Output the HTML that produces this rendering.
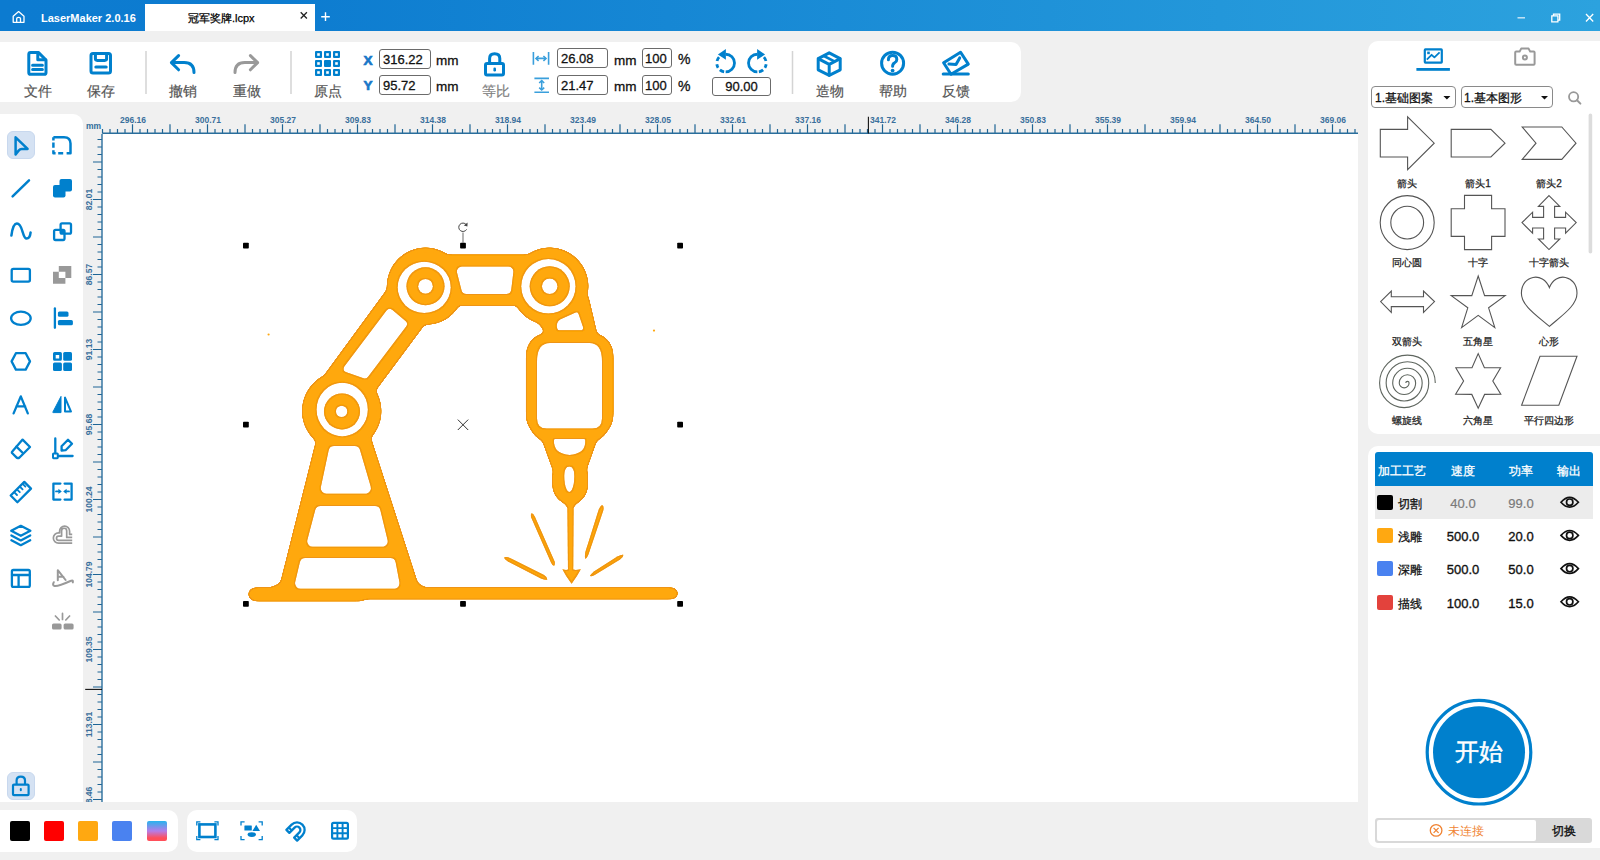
<!DOCTYPE html>
<html><head><meta charset="utf-8">
<style>
*{box-sizing:border-box;margin:0;padding:0}
html,body{width:1600px;height:860px;overflow:hidden;background:#f0f0f0;font-family:"Liberation Sans",sans-serif;position:relative}
.a{position:absolute}
svg{position:absolute;overflow:visible}
.lbl{position:absolute;font-size:14px;color:#555;white-space:nowrap;line-height:1;-webkit-text-stroke:0.2px #555}
.inp{position:absolute;border:1px solid #6b6b6b;border-radius:3px;background:#fff;font-size:13px;color:#111;line-height:20px;padding-left:3px;white-space:nowrap;-webkit-text-stroke:0.3px #111}
.sl{font-size:10px;color:#222;width:80px;text-align:center;line-height:1;-webkit-text-stroke:0.25px #222}
.th{font-size:12px;color:#fff;line-height:1;width:60px;text-align:left;-webkit-text-stroke:0.3px #fff}
.td{font-size:12px;color:#111;line-height:1;-webkit-text-stroke:0.3px #111}
.tn{font-size:13px;color:#111;line-height:1;width:60px;text-align:center;-webkit-text-stroke:0.35px #111}
.unit{position:absolute;font-size:13.5px;color:#111;line-height:1;white-space:nowrap;-webkit-text-stroke:0.3px #111}
</style></head><body>
<!-- title bar -->
<div class="a" style="left:0;top:0;width:1600px;height:31px;background:linear-gradient(90deg,#0c7bd0 0%,#0d7cd0 18%,#2ca2de 100%)"></div>
<div class="a" style="left:145px;top:4px;width:170px;height:27px;background:#fff"></div>
<svg class="a" style="left:0;top:0" width="40" height="31" viewBox="0 0 40 31">
<path d="M13.2 22.3V16.2L18.6 11.6L24 16.2V22.3ZM16.7 22.3V18.6Q16.7 17.4 18.6 17.4Q20.5 17.4 20.5 18.6V22.3" fill="none" stroke="#fff" stroke-width="1.3" stroke-linejoin="round"/>
</svg>
<div class="a" style="left:41px;top:13px;font-size:11px;color:#fff;font-weight:bold;line-height:1">LaserMaker 2.0.16</div>
<div class="a" style="left:188px;top:12.5px;font-size:11px;color:#000;line-height:1;-webkit-text-stroke:0.25px #000">冠军奖牌.lcpx</div>
<svg class="a" style="left:0;top:0" width="1600" height="31">
<path d="M300.7 12.3L306.9 18.5M306.9 12.3L300.7 18.5" stroke="#222" stroke-width="1.3"/>
<path d="M325.5 12.3V21M321.2 16.7H329.8" stroke="#fff" stroke-width="1.4"/>
<path d="M1517.5 17.8H1525" stroke="#cfe8f7" stroke-width="1.4"/>
<path d="M1551.8 15.9H1557.9V21.8H1551.8ZM1553.5 15.9V14.2H1559.7V20.1H1557.9" fill="none" stroke="#fff" stroke-width="1.3"/>
<path d="M1586 14L1593.2 21.5M1593.2 14L1586 21.5" stroke="#fff" stroke-width="1.3"/>
</svg>

<!-- toolbar -->
<div class="a" style="left:0;top:42px;width:1021px;height:60px;background:#fff;border-radius:0 10px 10px 0"></div>
<svg class="a" style="left:0;top:0" width="1021" height="102">
<g fill="none" stroke="#0080cd" stroke-width="3" stroke-linejoin="round" stroke-linecap="round">
<!-- file -->
<path d="M28.8 54.5Q28.8 52.6 30.6 52.6H38.6L46 60V72.4Q46 74.3 44.2 74.3H30.6Q28.8 74.3 28.8 72.4Z"/>
<path d="M37.8 52.8V59.8H45.6"/>
<path d="M32.6 65.2H42.4M32.6 69.4H42.4"/>
<!-- save -->
<rect x="91" y="53.6" width="19.5" height="19.5" rx="2"/>
<path d="M95.4 54V58.6Q95.4 60.4 97.2 60.4H104.8Q106.6 60.4 106.6 58.6V54"/>
<path d="M95.8 66.9H106.2"/>
<!-- undo -->
<path d="M178.6 55.6L171.4 62.6L178.6 69.8"/>
<path d="M172 62.6H184.2Q194 62.6 194 72.6"/>
<!-- lock -->
<rect x="485.5" y="63.6" width="18" height="11.3" rx="1.5"/>
<path d="M489.6 63.4V58.6Q489.6 53.7 494.6 53.7Q499.8 53.7 499.8 58.6V63.4"/>
<!-- help -->
<circle cx="892.6" cy="63.2" r="11"/>
<path d="M888.4 59.8Q888.4 55.6 892.6 55.6Q896.8 55.6 896.8 59.4Q896.8 61.6 894.6 62.8Q892.6 63.8 892.6 66.2"/>
<!-- box -->
<path d="M829.2 52.8L840.2 58.6V69.8L829.2 75.4L818.2 69.8V58.6Z"/>
<path d="M818.6 58.8L829.2 64.4L839.8 58.8M829.2 64.4V75"/>
<path d="M824 56L834.4 61.4" stroke-width="2.6"/>
<!-- feedback -->
<path d="M943.6 62.7L960.6 52.2L968.3 64.1L951 74.2Z"/>
<path d="M948.9 64.1L956 64.5L959.7 57.9"/>
<path d="M943.2 73.9H968.3"/>
</g>
<g fill="none" stroke="#999" stroke-width="3" stroke-linejoin="round" stroke-linecap="round">
<path d="M250.4 55.6L257.6 62.6L250.4 69.8"/>
<path d="M257 62.6H244.8Q235 62.6 235 72.6"/>
</g>
<circle cx="892.6" cy="70.6" r="1.9" fill="#0080cd"/>
<rect x="493.4" y="67.6" width="2.6" height="3.8" rx="1.2" fill="#0080cd"/>
<!-- origin grid -->
<g fill="#0080cd">
<rect x="315" y="51" width="7" height="7" rx="1"/><rect x="324" y="51" width="7" height="7" rx="1"/><rect x="333" y="51" width="7" height="7" rx="1"/>
<rect x="315" y="60" width="7" height="7" rx="1"/><rect x="324" y="60" width="7" height="7" rx="1"/><rect x="333" y="60" width="7" height="7" rx="1"/>
<rect x="315" y="69" width="7" height="7" rx="1"/><rect x="324" y="69" width="7" height="7" rx="1"/><rect x="333" y="69" width="7" height="7" rx="1"/>
</g>
<g fill="#fff">
<rect x="317.2" y="53.2" width="2.6" height="2.6"/><rect x="326.2" y="53.2" width="2.6" height="2.6"/><rect x="335.2" y="53.2" width="2.6" height="2.6"/>
<rect x="317.2" y="62.2" width="2.6" height="2.6"/><rect x="335.2" y="62.2" width="2.6" height="2.6"/>
<rect x="317.2" y="71.2" width="2.6" height="2.6"/><rect x="326.2" y="71.2" width="2.6" height="2.6"/><rect x="335.2" y="71.2" width="2.6" height="2.6"/>
</g>
<!-- separators -->
<path d="M146 51V94M291 51V94M792.5 51V94" stroke="#d4d4d4" stroke-width="1.5"/>
<!-- width/height icons -->
<g fill="none" stroke="#3a9fdc" stroke-width="1.6">
<path d="M533.4 52V64.8M548.6 52V64.8M536 58.4H546"/>
<path d="M538.6 56L536 58.4L538.6 60.8M543.4 56L546 58.4L543.4 60.8"/>
<path d="M534.4 78.4H549M534.4 92.2H549M541.7 80.6V90"/>
<path d="M539.2 83L541.7 80.6L544.2 83M539.2 87.6L541.7 90L544.2 87.6"/>
</g>
<!-- rotate icons -->
<g fill="none" stroke="#0080cd" stroke-width="2.8">
<g id="rot"><path d="M725.65 54.25A8.85 8.85 0 0 1 725.65 71.95"/>
<path d="M725.65 71.95A8.85 8.85 0 0 1 719.07 57.18" stroke-dasharray="0 1.55 4.6 2.6 3.9 3.1 4.6 100"/></g>
<use href="#rot" transform="translate(1483 0) scale(-1 1)"/>
</g>
<path d="M725.9 48.9V59.8L717.9 54.55Z" fill="#0080cd"/>
<path d="M757.1 48.9V59.8L765.1 54.55Z" fill="#0080cd"/>
<!-- X Y labels -->
<text x="363.4" y="64.6" font-size="13.6" font-weight="bold" fill="#1877c8" stroke="#1877c8" stroke-width="0.7" font-family="Liberation Sans">X</text>
<text x="363.6" y="90.4" font-size="13.6" font-weight="bold" fill="#1877c8" stroke="#1877c8" stroke-width="0.7" font-family="Liberation Sans">Y</text>
</svg>
<div class="lbl" style="left:23.5px;top:84.3px">文件</div>
<div class="lbl" style="left:86.5px;top:84.3px">保存</div>
<div class="lbl" style="left:168.5px;top:84.3px">撤销</div>
<div class="lbl" style="left:232.5px;top:84.3px">重做</div>
<div class="lbl" style="left:313.5px;top:84.3px">原点</div>
<div class="lbl" style="left:481.5px;top:84.3px;color:#808080;-webkit-text-stroke:0.2px #808080">等比</div>
<div class="lbl" style="left:815.5px;top:84.3px">造物</div>
<div class="lbl" style="left:878.5px;top:84.3px">帮助</div>
<div class="lbl" style="left:941.5px;top:84.3px">反馈</div>
<div class="inp" style="left:379px;top:49px;width:52px;height:20px">316.22</div>
<div class="inp" style="left:379px;top:75px;width:52px;height:20px">95.72</div>
<div class="unit" style="left:436px;top:54px">mm</div>
<div class="unit" style="left:436px;top:80px">mm</div>
<div class="inp" style="left:557px;top:48px;width:51px;height:20px">26.08</div>
<div class="inp" style="left:557px;top:75px;width:51px;height:20px">21.47</div>
<div class="unit" style="left:614px;top:54px">mm</div>
<div class="unit" style="left:614px;top:80px">mm</div>
<div class="inp" style="left:642px;top:48px;width:30px;height:20px;padding-left:2px">100</div>
<div class="inp" style="left:642px;top:75px;width:30px;height:20px;padding-left:2px">100</div>
<div class="unit" style="left:678px;top:52px;font-size:14px">%</div>
<div class="unit" style="left:678px;top:79px;font-size:14px">%</div>
<div class="inp" style="left:712px;top:77px;width:59px;height:19px;padding-left:0;text-align:center;line-height:18px">90.00</div>

<!-- left panel -->
<div class="a" style="left:0;top:114px;width:83px;height:688px;background:#fff;border-radius:0 10px 0 0"></div>
<div class="a" style="left:7px;top:131px;width:27.5px;height:27.5px;background:#d5e2f3;border:1px solid #c8d8ee;border-radius:6px"></div>
<div class="a" style="left:7px;top:772px;width:28px;height:28px;background:#d5e2f3;border:1px solid #c8d8ee;border-radius:6px"></div>
<svg class="a" style="left:0;top:0" width="84" height="860">
<g fill="none" stroke="#0080cd" stroke-width="2.3" stroke-linejoin="round" stroke-linecap="round">
<!-- select -->
<path d="M15.6 137.3L27.6 148.9H21.8Q20 148.9 18.6 150.6L15.6 154.4Z" stroke-width="2.5"/>
<!-- dashed rounded rect -->
<path d="M53.4 137.2H64Q70.5 137.2 70.5 143.6V153.2H66.6" stroke-width="2.5" stroke-linecap="butt"/>
<path d="M63.2 153.2H58.2M55.6 153.2H53.4V150.2M53.4 147.8V142.6M53.4 140.4V137.2" stroke-width="2.5" stroke-linecap="butt"/>
<!-- line -->
<path d="M12.6 196.4L29 180.3" stroke-width="2.5"/>
<!-- wave -->
<path d="M11.4 235.6Q13 223.6 16.9 223.6Q20.2 223.6 22.6 231.8Q24.6 238.6 26.6 238.6Q30 238.6 30.6 232.4" stroke-width="2.5"/>
<!-- intersect -->
<rect x="54.1" y="229.8" width="10.4" height="10.2" rx="1.4"/>
<rect x="60.6" y="223.4" width="10.4" height="10.2" rx="1.4"/>
<!-- rect -->
<rect x="11.7" y="268.8" width="18.2" height="12.8" rx="1.6"/>
<!-- ellipse -->
<ellipse cx="20.9" cy="318.3" rx="9.8" ry="6.6"/>
<!-- align -->
<path d="M54.9 308.4V327.8"/>
<!-- hexagon -->
<path d="M11.6 361.4L15.9 353.2H25.7L30 361.4L25.7 369.6H15.9Z"/>
<!-- A -->
<path d="M13.6 413.4L20.8 396.4L27.8 413.4M16.4 406.3H25.2"/>
<!-- mirror outline tri -->
<path d="M65 397.6V411.6H71L65 397.6Z" stroke-width="2"/>
<!-- eraser -->
<path d="M22.6 439.6L30 447L19 458L17.5 458Q17 458 16.4 457.4L12.3 453.3Q11.4 452.4 12.3 451.5Z"/>
<path d="M16.4 446.6L22.6 452.8"/>
<!-- pen corner -->
<path d="M55.3 438.4V453.2M58 456H72.6"/>
<rect x="53" y="453.4" width="4.8" height="4.8" rx="0.6" stroke-width="2"/>
<path d="M61.6 450.6V446.2L68 439.8L72 443.8L65.6 450.2Z"/>
<!-- ruler -->
<path d="M24.3 481.9L31 488.6L17.4 502.2L10.7 495.5Z"/>
<path d="M14.6 492.6L17 495M17.4 489.8L19.8 492.2M20.2 487L22.6 489.4M23 484.2L25.4 486.6" stroke-width="1.8"/>
<!-- compress -->
<path d="M60.4 483.6H53.4V499.6H60.4M64.6 483.6H71.6V499.6H64.6"/>
<path d="M56 491.4H59.6M69 491.4H65.4" stroke-width="1.8"/>
<!-- layers -->
<path d="M20.8 525.8L30.4 530.8L20.8 535.8L11.2 530.8Z"/>
<path d="M11.4 535.4L20.8 540.4L30.2 535.4M11.4 540.2L20.8 545.2L30.2 540.2"/>
<!-- layout -->
<rect x="11.9" y="570" width="17.9" height="16.9" rx="1.4"/>
<path d="M12 575H29.8M18.6 575V586.8"/>
<!-- bottom frame icons -->
</g>
<path d="M58.4 488.8L61.8 491.4L58.4 494ZM66.6 488.8L63.2 491.4L66.6 494Z" fill="#0080cd"/>
<g fill="#0080cd">
<!-- union -->
<rect x="53" y="184.9" width="12.5" height="12.7" rx="2"/>
<rect x="59.5" y="178.9" width="12.5" height="12.5" rx="2"/>
<!-- intersect overlap -->
<rect x="60.6" y="229.8" width="3.9" height="3.8"/>
<!-- align bars -->
<rect x="57.9" y="311.5" width="10.6" height="5.3" rx="1.5"/>
<rect x="57.9" y="319.9" width="15" height="5.3" rx="1.5"/>
<!-- grid -->
<path d="M54.5 352.1H60.4Q61.9 352.1 61.9 353.6V359.3Q61.9 360.8 60.4 360.8H54.5Q53 360.8 53 359.3V353.6Q53 352.1 54.5 352.1ZM55.7 355V358.5H59.2V355Z" fill-rule="evenodd"/>
<rect x="63.2" y="352.1" width="8.8" height="8.7" rx="1.5"/>
<rect x="53" y="362.6" width="8.9" height="8.4" rx="1.5"/>
<rect x="63.2" y="362.6" width="8.8" height="8.4" rx="1.5"/>
<!-- mirror filled -->
<path d="M61 396.4V412.6H53.2Q52.6 412.6 52.9 412Z" stroke="#0080cd" stroke-width="1" stroke-linejoin="round"/>
<!-- lock bottom -->
</g>
<!-- xor gray -->
<path d="M53 271.7H58.8V266H71.3V277.9H65.4V283.8H53ZM58.8 271.7V277.9H65.4V271.7Z" fill="#999" fill-rule="evenodd"/>
<g fill="none" stroke="#999" stroke-width="2" stroke-linecap="round" stroke-linejoin="round">
<!-- offset cloud -->
<path d="M72.2 534.4H69.6V531.2A5 5 0 0 0 59.6 531.2V532.85H58.5A5.15 5.15 0 0 0 58.5 543.15H72.2M72.2 537.4H66.7V530.8A2.55 2.55 0 0 0 61.6 530.8V536.1H58.6A2.1 2.1 0 0 0 58.6 540.3H72.2" stroke-width="1.7" stroke-linecap="butt"/>
<!-- A with swoosh -->
<path d="M57.8 580.2V570.2L65.6 580M59.2 576.8H63.4"/>
<path d="M53.8 582.2Q52 585.4 54.6 586Q58 586.6 70.4 581Q73.6 579.6 72.8 582.4"/>
</g>
<!-- laser dots gray -->
<g fill="#999">
<rect x="52" y="623.5" width="9.6" height="6" rx="1.6"/>
<rect x="63.6" y="623.5" width="10" height="6" rx="1.6"/>
</g>
<path d="M62.5 613.4V619.4M55.4 616L59.2 620M69.6 616L65.8 620" stroke="#999" stroke-width="1.7" stroke-linecap="round"/>
<!-- lock bottom-left -->
<g fill="none" stroke="#0080cd" stroke-width="2.2">
<rect x="13" y="784.6" width="15.6" height="10.6" rx="1"/>
<path d="M16.6 784.4V780.6Q16.6 776.6 20.8 776.6Q25 776.6 25 780.6V784.4"/>
</g>
<rect x="19.8" y="788" width="2" height="3.2" rx="1" fill="#0080cd"/>
</svg>

<!-- canvas -->
<div class="a" style="left:102px;top:134px;width:1256px;height:668px;background:#fff"></div>
<svg class="a" style="left:0;top:0" width="1600" height="140">
<path d="M102.50 129.10V133.5M110.00 129.10V133.5M117.50 129.10V133.5M125.00 129.10V133.5M132.50 124.30V133.5M140.00 129.10V133.5M147.50 129.10V133.5M155.00 129.10V133.5M162.50 129.10V133.5M170.00 124.30V133.5M177.50 129.10V133.5M185.00 129.10V133.5M192.50 129.10V133.5M200.00 129.10V133.5M207.50 124.30V133.5M215.00 129.10V133.5M222.50 129.10V133.5M230.00 129.10V133.5M237.50 129.10V133.5M245.00 124.30V133.5M252.50 129.10V133.5M260.00 129.10V133.5M267.50 129.10V133.5M275.00 129.10V133.5M282.50 124.30V133.5M290.00 129.10V133.5M297.50 129.10V133.5M305.00 129.10V133.5M312.50 129.10V133.5M320.00 124.30V133.5M327.50 129.10V133.5M335.00 129.10V133.5M342.50 129.10V133.5M350.00 129.10V133.5M357.50 124.30V133.5M365.00 129.10V133.5M372.50 129.10V133.5M380.00 129.10V133.5M387.50 129.10V133.5M395.00 124.30V133.5M402.50 129.10V133.5M410.00 129.10V133.5M417.50 129.10V133.5M425.00 129.10V133.5M432.50 124.30V133.5M440.00 129.10V133.5M447.50 129.10V133.5M455.00 129.10V133.5M462.50 129.10V133.5M470.00 124.30V133.5M477.50 129.10V133.5M485.00 129.10V133.5M492.50 129.10V133.5M500.00 129.10V133.5M507.50 124.30V133.5M515.00 129.10V133.5M522.50 129.10V133.5M530.00 129.10V133.5M537.50 129.10V133.5M545.00 124.30V133.5M552.50 129.10V133.5M560.00 129.10V133.5M567.50 129.10V133.5M575.00 129.10V133.5M582.50 124.30V133.5M590.00 129.10V133.5M597.50 129.10V133.5M605.00 129.10V133.5M612.50 129.10V133.5M620.00 124.30V133.5M627.50 129.10V133.5M635.00 129.10V133.5M642.50 129.10V133.5M650.00 129.10V133.5M657.50 124.30V133.5M665.00 129.10V133.5M672.50 129.10V133.5M680.00 129.10V133.5M687.50 129.10V133.5M695.00 124.30V133.5M702.50 129.10V133.5M710.00 129.10V133.5M717.50 129.10V133.5M725.00 129.10V133.5M732.50 124.30V133.5M740.00 129.10V133.5M747.50 129.10V133.5M755.00 129.10V133.5M762.50 129.10V133.5M770.00 124.30V133.5M777.50 129.10V133.5M785.00 129.10V133.5M792.50 129.10V133.5M800.00 129.10V133.5M807.50 124.30V133.5M815.00 129.10V133.5M822.50 129.10V133.5M830.00 129.10V133.5M837.50 129.10V133.5M845.00 124.30V133.5M852.50 129.10V133.5M860.00 129.10V133.5M867.50 129.10V133.5M875.00 129.10V133.5M882.50 124.30V133.5M890.00 129.10V133.5M897.50 129.10V133.5M905.00 129.10V133.5M912.50 129.10V133.5M920.00 124.30V133.5M927.50 129.10V133.5M935.00 129.10V133.5M942.50 129.10V133.5M950.00 129.10V133.5M957.50 124.30V133.5M965.00 129.10V133.5M972.50 129.10V133.5M980.00 129.10V133.5M987.50 129.10V133.5M995.00 124.30V133.5M1002.50 129.10V133.5M1010.00 129.10V133.5M1017.50 129.10V133.5M1025.00 129.10V133.5M1032.50 124.30V133.5M1040.00 129.10V133.5M1047.50 129.10V133.5M1055.00 129.10V133.5M1062.50 129.10V133.5M1070.00 124.30V133.5M1077.50 129.10V133.5M1085.00 129.10V133.5M1092.50 129.10V133.5M1100.00 129.10V133.5M1107.50 124.30V133.5M1115.00 129.10V133.5M1122.50 129.10V133.5M1130.00 129.10V133.5M1137.50 129.10V133.5M1145.00 124.30V133.5M1152.50 129.10V133.5M1160.00 129.10V133.5M1167.50 129.10V133.5M1175.00 129.10V133.5M1182.50 124.30V133.5M1190.00 129.10V133.5M1197.50 129.10V133.5M1205.00 129.10V133.5M1212.50 129.10V133.5M1220.00 124.30V133.5M1227.50 129.10V133.5M1235.00 129.10V133.5M1242.50 129.10V133.5M1250.00 129.10V133.5M1257.50 124.30V133.5M1265.00 129.10V133.5M1272.50 129.10V133.5M1280.00 129.10V133.5M1287.50 129.10V133.5M1295.00 124.30V133.5M1302.50 129.10V133.5M1310.00 129.10V133.5M1317.50 129.10V133.5M1325.00 129.10V133.5M1332.50 124.30V133.5M1340.00 129.10V133.5M1347.50 129.10V133.5M1355.00 129.10V133.5" stroke="#1f6595" stroke-width="1.2" fill="none"/>
<path d="M102.5 133.3H1358" stroke="#2a6e9c" stroke-width="1.4"/>
<text x="133.0" y="122.8" text-anchor="middle" font-size="8.5" fill="#3a6f9c" font-family="Liberation Sans" font-weight="bold">296.16</text>
<text x="208.0" y="122.8" text-anchor="middle" font-size="8.5" fill="#3a6f9c" font-family="Liberation Sans" font-weight="bold">300.71</text>
<text x="283.0" y="122.8" text-anchor="middle" font-size="8.5" fill="#3a6f9c" font-family="Liberation Sans" font-weight="bold">305.27</text>
<text x="358.0" y="122.8" text-anchor="middle" font-size="8.5" fill="#3a6f9c" font-family="Liberation Sans" font-weight="bold">309.83</text>
<text x="433.0" y="122.8" text-anchor="middle" font-size="8.5" fill="#3a6f9c" font-family="Liberation Sans" font-weight="bold">314.38</text>
<text x="508.0" y="122.8" text-anchor="middle" font-size="8.5" fill="#3a6f9c" font-family="Liberation Sans" font-weight="bold">318.94</text>
<text x="583.0" y="122.8" text-anchor="middle" font-size="8.5" fill="#3a6f9c" font-family="Liberation Sans" font-weight="bold">323.49</text>
<text x="658.0" y="122.8" text-anchor="middle" font-size="8.5" fill="#3a6f9c" font-family="Liberation Sans" font-weight="bold">328.05</text>
<text x="733.0" y="122.8" text-anchor="middle" font-size="8.5" fill="#3a6f9c" font-family="Liberation Sans" font-weight="bold">332.61</text>
<text x="808.0" y="122.8" text-anchor="middle" font-size="8.5" fill="#3a6f9c" font-family="Liberation Sans" font-weight="bold">337.16</text>
<text x="883.0" y="122.8" text-anchor="middle" font-size="8.5" fill="#3a6f9c" font-family="Liberation Sans" font-weight="bold">341.72</text>
<text x="958.0" y="122.8" text-anchor="middle" font-size="8.5" fill="#3a6f9c" font-family="Liberation Sans" font-weight="bold">346.28</text>
<text x="1033.0" y="122.8" text-anchor="middle" font-size="8.5" fill="#3a6f9c" font-family="Liberation Sans" font-weight="bold">350.83</text>
<text x="1108.0" y="122.8" text-anchor="middle" font-size="8.5" fill="#3a6f9c" font-family="Liberation Sans" font-weight="bold">355.39</text>
<text x="1183.0" y="122.8" text-anchor="middle" font-size="8.5" fill="#3a6f9c" font-family="Liberation Sans" font-weight="bold">359.94</text>
<text x="1258.0" y="122.8" text-anchor="middle" font-size="8.5" fill="#3a6f9c" font-family="Liberation Sans" font-weight="bold">364.50</text>
<text x="1333.0" y="122.8" text-anchor="middle" font-size="8.5" fill="#3a6f9c" font-family="Liberation Sans" font-weight="bold">369.06</text>
<path d="M868.4 116.8V133.5" stroke="#111" stroke-width="1.1"/>
<text x="86" y="128.5" font-size="8.5" fill="#2f6d9a" font-family="Liberation Sans" font-weight="bold">mm</text>
</svg>
<svg class="a" style="left:0;top:0;overflow:hidden" width="110" height="802">
<path d="M97.50 139.50H102M97.50 147.00H102M97.50 154.50H102M93.00 162.00H102M97.50 169.50H102M97.50 177.00H102M97.50 184.50H102M97.50 192.00H102M93.00 199.50H102M97.50 207.00H102M97.50 214.50H102M97.50 222.00H102M97.50 229.50H102M93.00 237.00H102M97.50 244.50H102M97.50 252.00H102M97.50 259.50H102M97.50 267.00H102M93.00 274.50H102M97.50 282.00H102M97.50 289.50H102M97.50 297.00H102M97.50 304.50H102M93.00 312.00H102M97.50 319.50H102M97.50 327.00H102M97.50 334.50H102M97.50 342.00H102M93.00 349.50H102M97.50 357.00H102M97.50 364.50H102M97.50 372.00H102M97.50 379.50H102M93.00 387.00H102M97.50 394.50H102M97.50 402.00H102M97.50 409.50H102M97.50 417.00H102M93.00 424.50H102M97.50 432.00H102M97.50 439.50H102M97.50 447.00H102M97.50 454.50H102M93.00 462.00H102M97.50 469.50H102M97.50 477.00H102M97.50 484.50H102M97.50 492.00H102M93.00 499.50H102M97.50 507.00H102M97.50 514.50H102M97.50 522.00H102M97.50 529.50H102M93.00 537.00H102M97.50 544.50H102M97.50 552.00H102M97.50 559.50H102M97.50 567.00H102M93.00 574.50H102M97.50 582.00H102M97.50 589.50H102M97.50 597.00H102M97.50 604.50H102M93.00 612.00H102M97.50 619.50H102M97.50 627.00H102M97.50 634.50H102M97.50 642.00H102M93.00 649.50H102M97.50 657.00H102M97.50 664.50H102M97.50 672.00H102M97.50 679.50H102M93.00 687.00H102M97.50 694.50H102M97.50 702.00H102M97.50 709.50H102M97.50 717.00H102M93.00 724.50H102M97.50 732.00H102M97.50 739.50H102M97.50 747.00H102M97.50 754.50H102M93.00 762.00H102M97.50 769.50H102M97.50 777.00H102M97.50 784.50H102M97.50 792.00H102M93.00 799.50H102" stroke="#1f6595" stroke-width="1.2" fill="none"/>
<path d="M102 134V802" stroke="#2a6e9c" stroke-width="1.4"/>
<path d="M85.2 689.4H102" stroke="#111" stroke-width="1.1"/>
<text transform="translate(92.3 199.5) rotate(-90)" text-anchor="middle" font-size="8.5" fill="#3a6f9c" font-family="Liberation Sans" font-weight="bold">82.01</text>
<text transform="translate(92.3 274.5) rotate(-90)" text-anchor="middle" font-size="8.5" fill="#3a6f9c" font-family="Liberation Sans" font-weight="bold">86.57</text>
<text transform="translate(92.3 349.5) rotate(-90)" text-anchor="middle" font-size="8.5" fill="#3a6f9c" font-family="Liberation Sans" font-weight="bold">91.13</text>
<text transform="translate(92.3 424.5) rotate(-90)" text-anchor="middle" font-size="8.5" fill="#3a6f9c" font-family="Liberation Sans" font-weight="bold">95.68</text>
<text transform="translate(92.3 499.5) rotate(-90)" text-anchor="middle" font-size="8.5" fill="#3a6f9c" font-family="Liberation Sans" font-weight="bold">100.24</text>
<text transform="translate(92.3 574.5) rotate(-90)" text-anchor="middle" font-size="8.5" fill="#3a6f9c" font-family="Liberation Sans" font-weight="bold">104.79</text>
<text transform="translate(92.3 649.5) rotate(-90)" text-anchor="middle" font-size="8.5" fill="#3a6f9c" font-family="Liberation Sans" font-weight="bold">109.35</text>
<text transform="translate(92.3 724.5) rotate(-90)" text-anchor="middle" font-size="8.5" fill="#3a6f9c" font-family="Liberation Sans" font-weight="bold">113.91</text>
<text transform="translate(92.3 799.5) rotate(-90)" text-anchor="middle" font-size="8.5" fill="#3a6f9c" font-family="Liberation Sans" font-weight="bold">118.46</text>
</svg>
<svg class="a" style="left:0;top:0" width="1600" height="860">
<defs>
<filter id="goo" x="0" y="0" width="1600" height="860" filterUnits="userSpaceOnUse">
<feGaussianBlur in="SourceGraphic" stdDeviation="2.2" result="b"/>
<feComponentTransfer in="b" result="t"><feFuncA type="linear" slope="14" intercept="-6.5"/></feComponentTransfer>
</filter>
<filter id="edge" x="0" y="0" width="1600" height="860" filterUnits="userSpaceOnUse">
<feMorphology in="SourceAlpha" operator="erode" radius="0.9" result="er"/>
<feComposite in="SourceAlpha" in2="er" operator="out" result="ring"/>
<feFlood flood-color="#ec9214" flood-opacity="0.9"/>
<feComposite in2="ring" operator="in" result="ec"/>
<feMerge><feMergeNode in="SourceGraphic"/><feMergeNode in="ec"/></feMerge>
</filter>
<mask id="m" maskUnits="userSpaceOnUse" x="0" y="0" width="1600" height="860"><rect x="0" y="0" width="1600" height="860" fill="#fff"/><!-- holes -->
<g fill="#000">
<ellipse cx="424.2" cy="287.3" rx="26.6" ry="25.6"/>
<circle cx="548.4" cy="286.3" r="27.2"/>
<ellipse cx="342.2" cy="409.6" rx="25.7" ry="26.8"/>
</g>
<g fill="#fff">
<circle cx="425.5" cy="286.3" r="19"/>
<circle cx="549.7" cy="286.3" r="20"/>
<circle cx="342" cy="411.4" r="18"/>
</g>
<g fill="#000" stroke="#000" stroke-linejoin="round">
<circle cx="425.5" cy="286.3" r="7.4" stroke="none"/>
<circle cx="549.7" cy="286.3" r="7.8" stroke="none"/>
<circle cx="341.6" cy="411.4" r="5.7" stroke="none"/>
<path d="M461.87 271.60L508.42 271.60L506.34 289.00L466.33 289.00Z" stroke-width="10"/>
<path d="M389.69 312.92L403.00 324.07L364.77 374.53L347.64 368.54Z" stroke-width="8"/>
<path d="M334.03 451.45L354.76 451.45L365.47 488.15L326.22 488.15Z" stroke-width="11"/>
<path d="M320.50 511.45L375.04 511.45L382.27 541.35L312.62 541.35Z" stroke-width="11"/>
<path d="M305.18 563.45L390.31 563.45L394.08 583.35L300.50 583.35Z" stroke-width="11"/>
<path d="M576.4 314.6L581 328H559.4Q558 323.4 562 321Z" stroke-width="4.5"/>
<path d="M537 361Q537 343 550 343H589.5Q602 343 602 361V418.6Q602 428.6 592.4 428.6H546.6Q537 428.6 537 418.6Z" stroke="none"/>
<path d="M555.2 440.4H584Q584.8 452.6 569.6 453.8Q554.6 452.6 555.2 440.4Z" stroke-width="2.6"/>
<path d="M569.3 466.4Q574.4 466.4 574.4 476Q574.4 485 571.8 490Q569.3 494.2 566.8 490Q564.2 485 564.2 476Q564.2 466.4 569.3 466.4Z" stroke="none"/>
</g>
</mask>
</defs>
<g filter="url(#edge)"><g mask="url(#m)">
<g filter="url(#goo)" fill="#ffa811">
<!-- joints -->
<circle cx="425.5" cy="286.3" r="39"/>
<circle cx="549.7" cy="286.3" r="39"/>
<rect x="425" y="254.4" width="125" height="51.4"/>
<!-- arm -->
<path d="M321 379L392 282L430 318L372 396Z"/>
<circle cx="341.7" cy="411" r="40"/>
<!-- A frame -->
<path d="M319 428L278.5 589H420L368 428Z"/>
<path d="M286 572Q283 587 262 588H290Z M412 572Q416 587 432 588H410Z"/>
<!-- base -->
<rect x="248" y="587.2" width="120" height="14.2" rx="7.1"/>
<rect x="300" y="587.2" width="378.2" height="12.4" rx="6.2"/>
<!-- connector -->
<path d="M534 318L588.6 296L598 336L612 356L527 358L544 331Z"/>
<!-- body -->
<rect x="525.7" y="333.6" width="87.9" height="103.4" rx="19" ry="22"/>
<path d="M527 416Q529 435 542 441L552.5 470H586.7L597 441Q610 435 612.3 416Z"/>
<path d="M552 478Q552 465 560 465H580Q588.3 465 588.3 478V484Q588.3 497 578 503Q573.2 506 573.2 510H567.8Q567.8 506 563 503Q552 497 552 484Z"/>
</g>
<g fill="#ffa811">
<path d="M567.4 505H573.6L573.2 570H568Z"/>
<path d="M562.6 589.2" />
<path d="M562.4 569.2Q566 570.4 568 569.6H573.4Q575.6 570.4 580.8 569.2Q577 576.4 571.6 583.8Q566 576.4 562.4 569.2Z"/>
<path d="M531.4 513.4Q533.2 513 535 517L554.8 562Q555 566 553.6 565.6Q552.6 565.6 551 562.4L531 517Q530.6 514 531.4 513.4Z"/>
<path d="M504.2 557.4Q506.4 556.4 512 559L544 575Q547.6 577.4 547.2 579.6Q545.6 580.4 541 578.4L508 561.6Q504 559 504.2 557.4Z"/>
<path d="M602.4 505.2Q604 506 603.4 510L588.6 554Q586.4 559.2 585.2 558.6Q584.6 557 585.4 552L598.6 510Q600.6 505 602.4 505.2Z"/>
<path d="M623.2 554.8Q623.6 556.8 620 559.4L594.6 575Q590.6 577 590 575.8Q591 574 594 571.4L617.4 556.6Q621.8 554.2 623.2 554.8Z"/>
</g>
</g></g>
<g fill="#ffa811"><circle cx="268.6" cy="334.5" r="1.1"/>
<circle cx="654" cy="330.6" r="1.1"/>
</g>
<!-- selection handles -->
<g fill="#000">
<rect x="243" y="242.7" width="5.8" height="5.8" rx="0.8"/>
<rect x="460.1" y="242.7" width="5.8" height="5.8" rx="0.8"/>
<rect x="677.2" y="242.7" width="5.8" height="5.8" rx="0.8"/>
<rect x="243" y="421.8" width="5.8" height="5.8" rx="0.8"/>
<rect x="677.2" y="421.8" width="5.8" height="5.8" rx="0.8"/>
<rect x="243" y="601" width="5.8" height="5.8" rx="0.8"/>
<rect x="460.1" y="601" width="5.8" height="5.8" rx="0.8"/>
<rect x="677.2" y="601" width="5.8" height="5.8" rx="0.8"/>
</g>
<path d="M463 232.6V243" stroke="#777" stroke-width="1.1"/>
<path d="M466.6 229.4A4.2 4.2 0 1 1 466.2 224.6" fill="none" stroke="#444" stroke-width="1"/>
<path d="M467.6 222.6L467.4 226.6L463.8 225.6Z" fill="#444"/>
<path d="M457.8 419.6L468.2 430M468.2 419.6L457.8 430" stroke="#333" stroke-width="1"/>
</svg>

<!-- bottom bars -->
<div class="a" style="left:0;top:810px;width:178px;height:42px;background:#fff;border-radius:0 10px 10px 0"></div>
<div class="a" style="left:187px;top:810px;width:170px;height:42px;background:#fff;border-radius:10px"></div>
<div class="a" style="left:10px;top:821px;width:20px;height:20px;background:#000;border-radius:2px"></div>
<div class="a" style="left:44px;top:821px;width:20px;height:20px;background:#ff0000;border-radius:2px"></div>
<div class="a" style="left:78px;top:821px;width:20px;height:20px;background:#ffa811;border-radius:2px"></div>
<div class="a" style="left:112px;top:821px;width:20px;height:20px;background:#4a82f0;border-radius:2px"></div>
<div class="a" style="left:147px;top:821px;width:20px;height:20px;background:linear-gradient(180deg,#27b4ee 0%,#b57de8 50%,#ff4f5a 85%,#ff4f5a 100%);border-radius:2px"></div>
<svg class="a" style="left:0;top:0" width="360" height="860">
<g fill="none" stroke="#0080cd">
<!-- frame -->
<rect x="199.4" y="824.4" width="16" height="12.6" stroke-width="2.6"/>
<path d="M196.8 825.4V821.8H200.4M214.4 821.8H218V825.4M218 836V839.6H214.4M200.4 839.6H196.8V836" stroke-width="1.3"/>
<!-- select shapes -->
<path d="M241 825.4V821.8H244.6M258.6 821.8H262.2V825.4M262.2 836V839.6H258.6M244.6 839.6H241V836" stroke-width="1.3"/>
<!-- magnet -->
<g transform="translate(297 830) rotate(45)"><path d="M-7.6 7.4V0A7.6 7.6 0 0 1 7.6 0V7.4H3.4V0A3.4 3.4 0 0 0 -3.4 0V7.4Z" stroke-width="2.3" stroke-linejoin="round"/><path d="M-7.6 4H-3.4M3.4 4H7.6" stroke-width="2.2"/></g>
<!-- grid -->
<rect x="332.1" y="822.8" width="15.8" height="15.8" rx="1.4" stroke-width="2.2"/>
<path d="M337.4 823V838.4M342.6 823V838.4M332.2 828.1H347.8M332.2 833.3H347.8" stroke-width="1.9"/>
</g>
<g fill="#0080cd">
<rect x="244.4" y="825.6" width="7.4" height="5" rx="0.5"/>
<path d="M256.2 824.8L260 831H252.4Z"/>
<ellipse cx="251.8" cy="834.6" rx="4.2" ry="2.3"/>
</g>
</svg>

<!-- right panels -->
<div class="a" style="left:1368px;top:41px;width:240px;height:393px;background:#fff;border-radius:10px 0 0 10px"></div>
<div class="a" style="left:1368px;top:446px;width:240px;height:402px;background:#fff;border-radius:10px 0 0 10px"></div>
<!-- dropdowns -->
<div class="a" style="left:1371px;top:86px;width:84.5px;height:22px;border:1px solid #8a8a8a;border-radius:4px;background:#fff"></div>
<div class="a" style="left:1460.5px;top:86px;width:92.5px;height:22px;border:1px solid #8a8a8a;border-radius:4px;background:#fff"></div>
<div class="a" style="left:1375px;top:92px;font-size:12px;color:#111;line-height:1;-webkit-text-stroke:0.3px #111">1.基础图案</div>
<div class="a" style="left:1464px;top:92px;font-size:12px;color:#111;line-height:1;-webkit-text-stroke:0.3px #111">1.基本图形</div>
<svg class="a" style="left:0;top:0" width="1600" height="860">
<!-- tab icons -->
<g fill="none" stroke="#0080cd" stroke-width="2.2" stroke-linejoin="round">
<rect x="1424.8" y="49.4" width="17" height="13.2" rx="0.6"/>
<path d="M1426.8 59.6L1431.6 54.8L1434.4 57.4L1439.6 52.4" stroke-width="1.8"/>
</g>
<rect x="1427.2" y="51.6" width="2.6" height="2.6" fill="#0080cd"/>
<rect x="1416.4" y="68" width="33.5" height="2.8" fill="#0080cd"/>
<g fill="none" stroke="#999" stroke-width="2">
<path d="M1515.2 52.6Q1515.2 51.6 1516.2 51.6H1519.6L1521.2 48.6H1528.6L1530.2 51.6H1533.6Q1534.6 51.6 1534.6 52.6V63.8Q1534.6 64.8 1533.6 64.8H1516.2Q1515.2 64.8 1515.2 63.8Z" stroke-linejoin="round"/>
<circle cx="1524.9" cy="57.4" r="2"/>
<circle cx="1573.6" cy="96.8" r="4.6" stroke-width="1.8"/>
<path d="M1577 100.2L1580.4 103.6" stroke-width="2" stroke-linecap="round"/>
</g>
<!-- dropdown arrows -->
<path d="M1443.4 96H1450.4L1446.9 99.6Z M1541 96H1548L1544.5 99.6Z" fill="#111"/>
<!-- scrollbar -->
<rect x="1588.6" y="113.6" width="3.6" height="140" rx="1.8" fill="#dcdcdc"/>
<!-- shapes -->
<g fill="none" stroke="#555" stroke-width="1.1" stroke-linejoin="miter">
<path d="M1380.3 129.4H1407.6V116.8L1434.2 143.2L1407.6 169.6V157H1380.3Z"/>
<path d="M1451.2 129.4H1490.9L1505 143.2L1490.9 157H1451.2Z"/>
<path d="M1522.2 127H1561.8L1576 143.2L1561.8 159.4H1522.2L1536 143.2Z"/>
<circle cx="1407.2" cy="222.6" r="27"/>
<circle cx="1407.2" cy="222.6" r="16.4"/>
<path d="M1464.5 195.4H1491.6V208.8H1505V236.4H1491.6V249.6H1464.5V236.4H1451.2V208.8H1464.5Z"/>
<path d="M1549 195.6L1559.8 206.4H1554.6V217.4H1565.6V212.2L1576.2 222.6L1565.6 233.2V228H1554.6V239H1559.8L1549 249.6L1538.4 239H1543.6V228H1532.6V233.2L1522 222.6L1532.6 212.2V217.4H1543.6V206.4H1538.4Z"/>
<path d="M1380.6 301.6L1391.3 291V296.8H1423.5V291L1434.5 301.6L1423.5 312.4V306.6H1391.3V312.4Z"/>
<path d="M1478.2 276L1484.6 295.6H1505.2L1488.6 307.8L1494.8 327.6L1478.2 315.4L1461.6 327.6L1467.8 307.8L1451.2 295.6H1471.8Z"/>
<path d="M1549.4 287.6C1543 271 1521.4 275.2 1521.4 293.2C1521.4 305.4 1536.2 315 1549.4 326.4C1562.6 315 1577 305.4 1577 293.2C1577 275.2 1555.6 271 1549.4 287.6Z"/>
<path d="M1478.2 353.6L1484.4 367.6L1500.6 367.8L1492.8 381L1500.8 394.2L1484.6 394.4L1478.2 408.2L1471.8 394.4L1455.6 394.2L1463.6 381L1455.8 367.8L1472 367.6Z"/>
<path d="M1540 356.2H1577L1558.8 405.2H1521.6Z"/>
</g>
<path d="M1407.3 383.2m0 0a1.4 1.4 0 0 1 2.8 0a4.2 4.2 0 0 1 -8.4 0a7 7 0 0 1 14 0a9.8 9.8 0 0 1 -19.6 0a12.6 12.6 0 0 1 25.2 0a15.4 15.4 0 0 1 -30.8 0a18.2 18.2 0 0 1 36.4 0a21 21 0 0 1 -42 0a23.8 23.8 0 0 1 47.6 0" fill="none" stroke="#5f665f" stroke-width="0.95" transform="translate(1405.8 383) scale(1.17) translate(-1407.3 -383.2)"/>
<!-- start button -->
<circle cx="1479" cy="752.2" r="51.8" fill="none" stroke="#0080cd" stroke-width="3.2"/>
<circle cx="1479" cy="752.2" r="46" fill="#0080cd"/>
</svg>
<!-- shape labels -->
<div class="a sl" style="left:1367px;top:179px">箭头</div>
<div class="a sl" style="left:1438px;top:179px">箭头1</div>
<div class="a sl" style="left:1509px;top:179px">箭头2</div>
<div class="a sl" style="left:1367px;top:258px">同心圆</div>
<div class="a sl" style="left:1438px;top:258px">十字</div>
<div class="a sl" style="left:1509px;top:258px">十字箭头</div>
<div class="a sl" style="left:1367px;top:337px">双箭头</div>
<div class="a sl" style="left:1438px;top:337px">五角星</div>
<div class="a sl" style="left:1509px;top:337px">心形</div>
<div class="a sl" style="left:1367px;top:416px">螺旋线</div>
<div class="a sl" style="left:1438px;top:416px">六角星</div>
<div class="a sl" style="left:1509px;top:416px">平行四边形</div>
<!-- table -->
<div class="a" style="left:1375px;top:452px;width:218px;height:34px;background:#0080cd;border-radius:3px 3px 0 0"></div>
<div class="a" style="left:1375px;top:486px;width:218px;height:33px;background:#ececec"></div>
<div class="a th" style="left:1378px;top:465px">加工工艺</div>
<div class="a th" style="left:1451px;top:465px">速度</div>
<div class="a th" style="left:1509px;top:465px">功率</div>
<div class="a th" style="left:1557px;top:465px">输出</div>
<div class="a" style="left:1377px;top:495px;width:15.5px;height:15px;background:#000;border-radius:2px"></div>
<div class="a" style="left:1377px;top:528px;width:15.5px;height:15px;background:#ffa811;border-radius:2px"></div>
<div class="a" style="left:1377px;top:561px;width:15.5px;height:15px;background:#4a82f0;border-radius:2px"></div>
<div class="a" style="left:1377px;top:595px;width:15.5px;height:15px;background:#e3423c;border-radius:2px"></div>
<div class="a td" style="left:1398px;top:497.5px">切割</div>
<div class="a td" style="left:1398px;top:530.5px">浅雕</div>
<div class="a td" style="left:1398px;top:563.5px">深雕</div>
<div class="a td" style="left:1398px;top:597.5px">描线</div>
<div class="a tn" style="left:1433px;top:497px;color:#7a7a7a;-webkit-text-stroke:0.2px #7a7a7a">40.0</div>
<div class="a tn" style="left:1491px;top:497px;color:#7a7a7a;-webkit-text-stroke:0.2px #7a7a7a">99.0</div>
<div class="a tn" style="left:1433px;top:530px">500.0</div>
<div class="a tn" style="left:1491px;top:530px">20.0</div>
<div class="a tn" style="left:1433px;top:563px">500.0</div>
<div class="a tn" style="left:1491px;top:563px">50.0</div>
<div class="a tn" style="left:1433px;top:597px">100.0</div>
<div class="a tn" style="left:1491px;top:597px">15.0</div>
<!-- start text -->
<div class="a" style="left:1429px;top:740px;width:100px;text-align:center;font-size:24px;color:#fff;line-height:1;-webkit-text-stroke:0.5px #fff">开始</div>
<!-- connection bar -->
<div class="a" style="left:1375px;top:818px;width:217px;height:25px;background:#d9d9d9;border-radius:3px"></div>
<div class="a" style="left:1377px;top:820px;width:159px;height:21px;background:#fff;border-radius:2px"></div>
<div class="a" style="left:1448px;top:825px;font-size:12.3px;color:#f08434;line-height:1">未连接</div>
<div class="a" style="left:1552px;top:825px;font-size:12.2px;color:#111;line-height:1;-webkit-text-stroke:0.35px #111">切换</div>

<svg class="a" style="left:0;top:0" width="1600" height="860">
<!-- table eye icons -->
<g fill="none" stroke="#111" stroke-width="1.7">
<path d="M1561 502.2Q1569.6 492.4 1578.4 502.2Q1569.6 512 1561 502.2Z"/><circle cx="1569.7" cy="502.2" r="3.2"/>
<path d="M1561 535.4Q1569.6 525.6 1578.4 535.4Q1569.6 545.2 1561 535.4Z"/><circle cx="1569.7" cy="535.4" r="3.2"/>
<path d="M1561 568.6Q1569.6 558.8 1578.4 568.6Q1569.6 578.4 1561 568.6Z"/><circle cx="1569.7" cy="568.6" r="3.2"/>
<path d="M1561 601.8Q1569.6 592 1578.4 601.8Q1569.6 611.6 1561 601.8Z"/><circle cx="1569.7" cy="601.8" r="3.2"/>
</g>
<!-- not-connected icon -->
<circle cx="1436.1" cy="830.4" r="5.8" fill="none" stroke="#f08434" stroke-width="1.3"/>
<path d="M1433.6 827.9L1438.6 832.9M1438.6 827.9L1433.6 832.9" stroke="#f08434" stroke-width="1.3"/>
</svg>

</body></html>
